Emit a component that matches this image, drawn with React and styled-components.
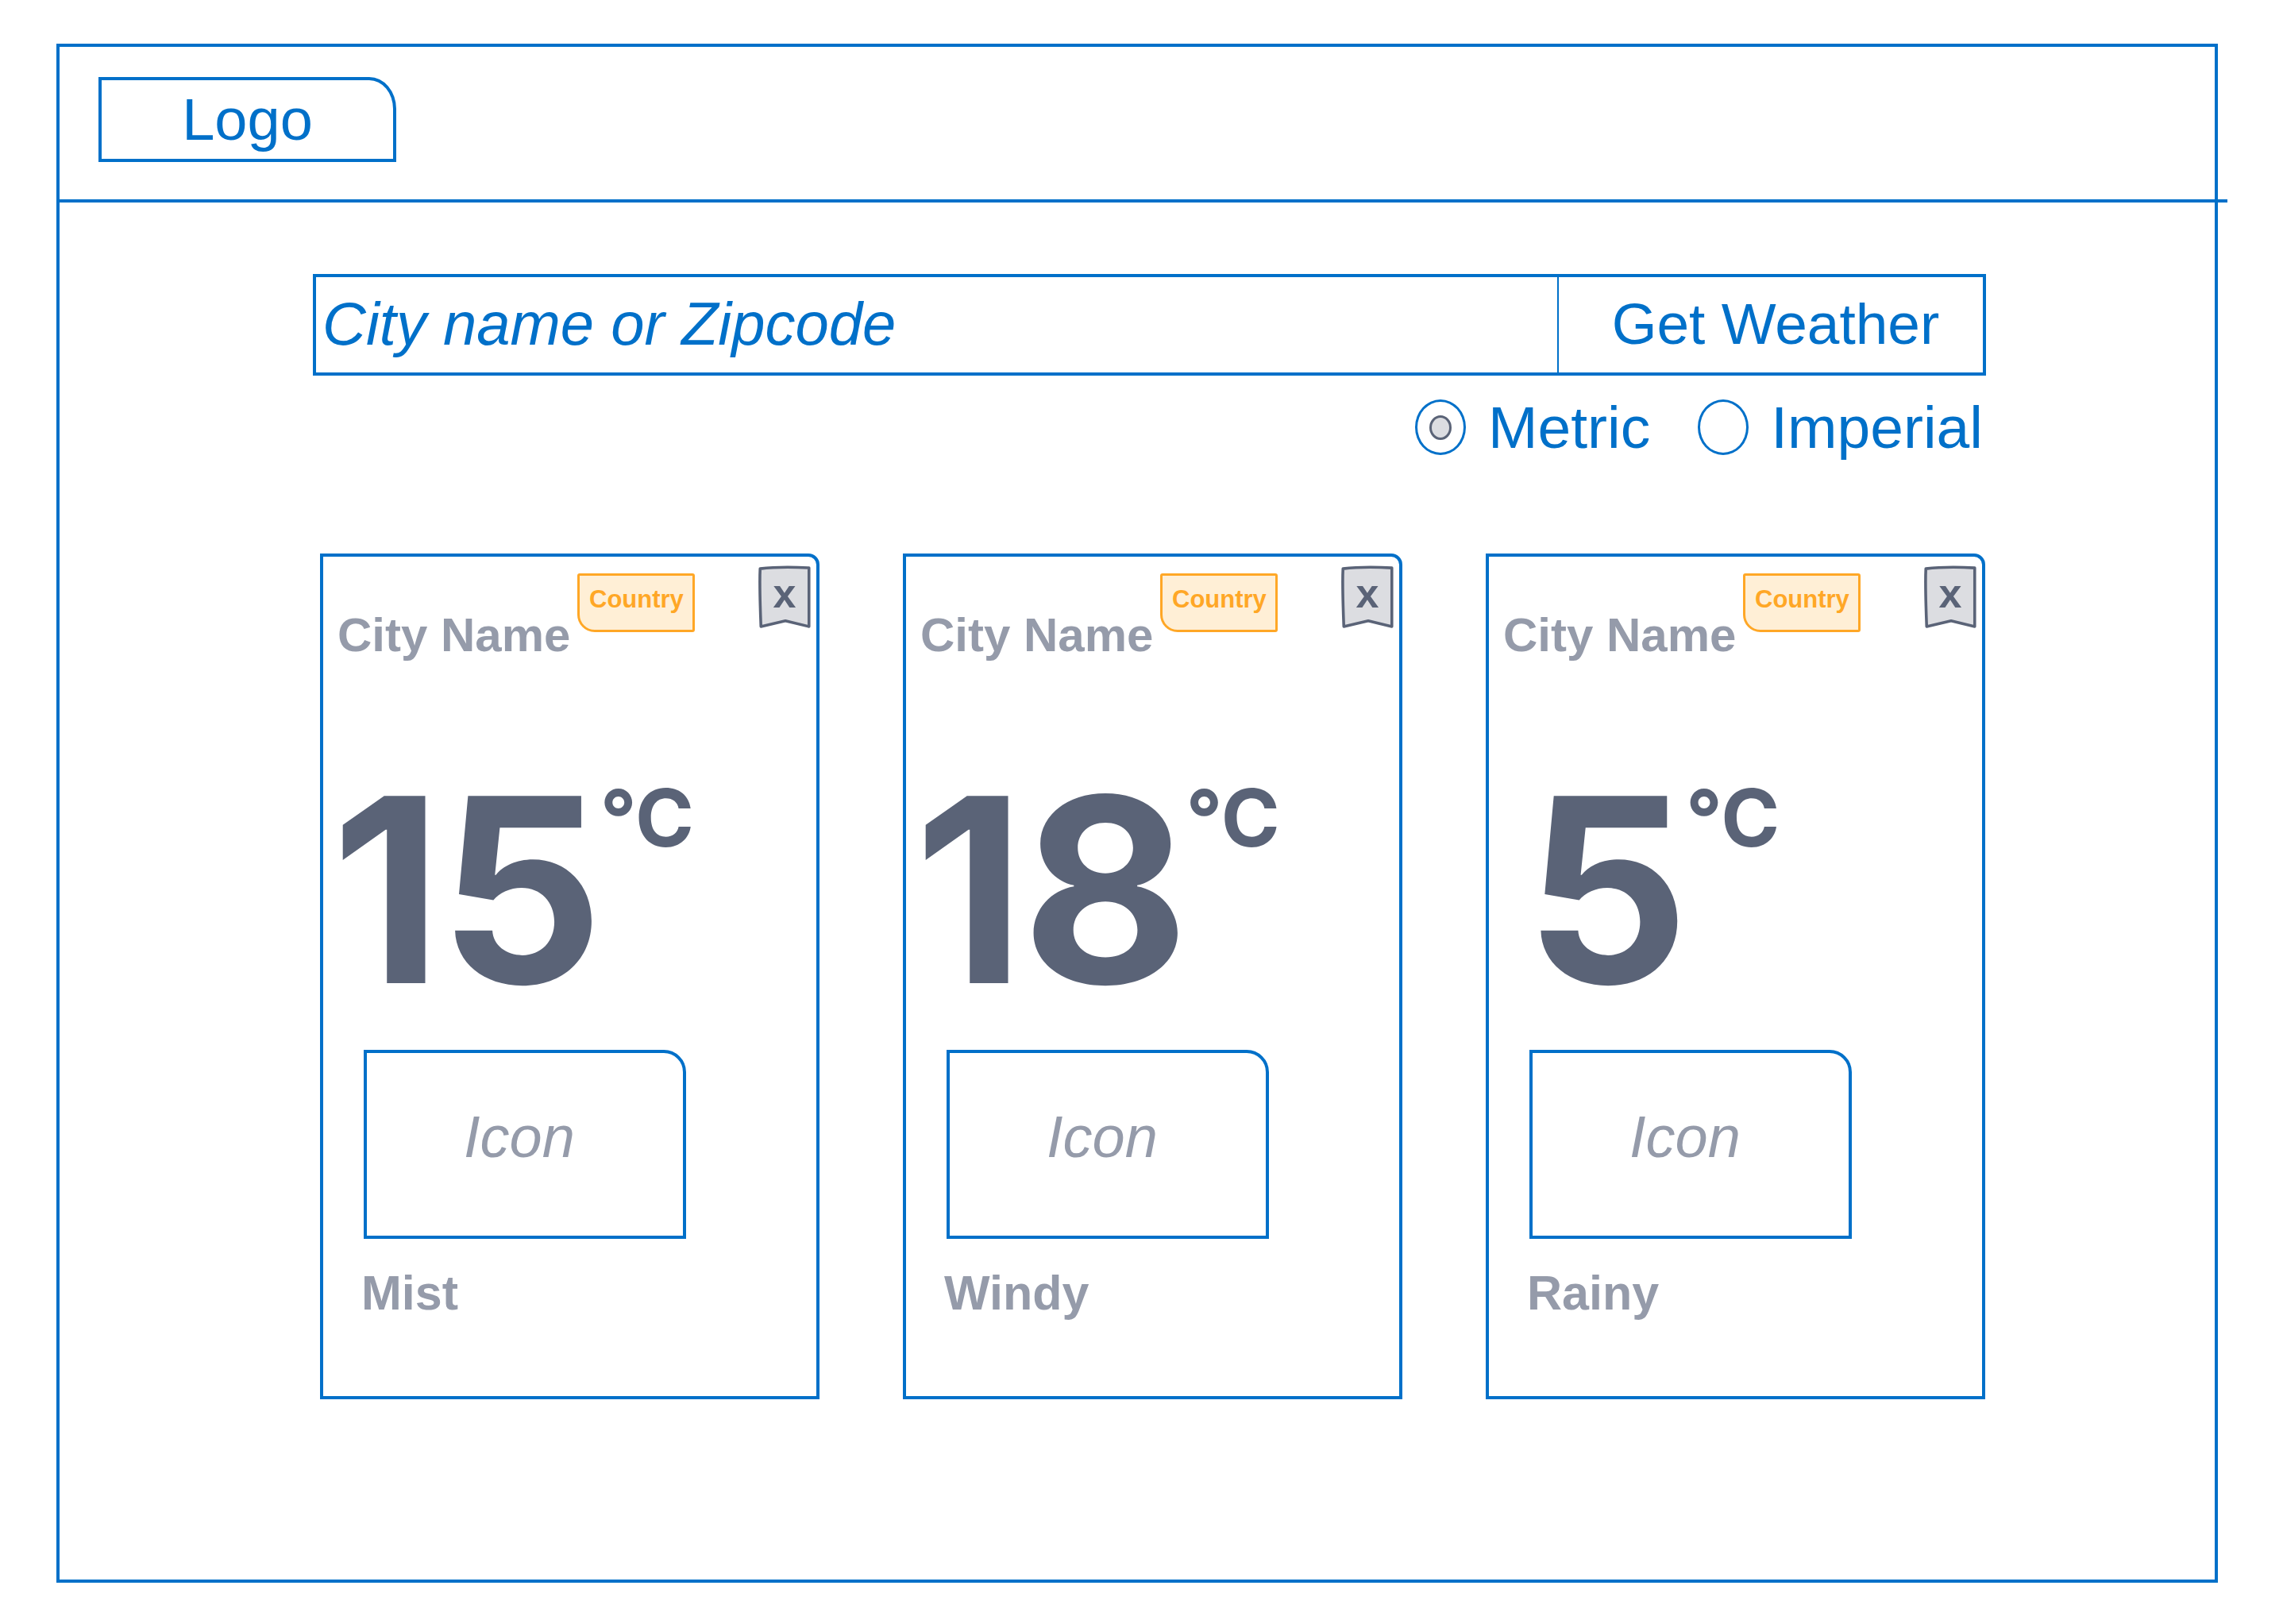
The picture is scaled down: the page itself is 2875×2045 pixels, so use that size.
import React, { useState } from 'react';
import styled, { createGlobalStyle } from 'styled-components';

const cities = [
  { id: 1, name: 'City Name', country: 'Country', temp: 15, condition: 'Mist' },
  { id: 2, name: 'City Name', country: 'Country', temp: 18, condition: 'Windy' },
  { id: 3, name: 'City Name', country: 'Country', temp: 5, condition: 'Rainy', indent: 35 },
];

const CloseShape = () => (
  <ShapeSvg viewBox="0 0 66 79" aria-hidden="true">
    <path
      d="M3 5 C 20 3, 45 3, 63 4 L 63 76 L 34 69 L 4 76 C 3 50, 2 25, 3 5 Z"
      fill="#dcdde1"
      stroke="#5a6377"
      strokeWidth="3.5"
      strokeLinejoin="round"
    />
  </ShapeSvg>
);

const WeatherCard = ({ name, country, temp, condition, indent }) => (
  <Card>
    <CardHead>
      <CityName>{name}</CityName>
      <Badge>{country}</Badge>
    </CardHead>
    <CloseButton>
      <CloseShape />
      <CloseLabel>x</CloseLabel>
    </CloseButton>
    <Temperature indent={indent || 0}>
      <Degrees>{temp}</Degrees>
      <Unit>°C</Unit>
    </Temperature>
    <IconBox>
      <IconLabel>Icon</IconLabel>
    </IconBox>
    <Condition>{condition}</Condition>
  </Card>
);

const App = () => {
  const [unit, setUnit] = useState('metric');

  return (
    <Page>
      <GlobalStyle />
      <Frame>
        <Header>
          <Logo>Logo</Logo>
        </Header>
        <Main>
          <SearchBar>
            <SearchInput placeholder="City name or Zipcode" />
            <SearchButton>Get Weather</SearchButton>
          </SearchBar>
          <UnitRow>
            <UnitOption onClick={() => setUnit('metric')}>
              <RadioCircle>{unit === 'metric' && <RadioDot />}</RadioCircle>
              <UnitLabel>Metric</UnitLabel>
            </UnitOption>
            <UnitOption onClick={() => setUnit('imperial')}>
              <RadioCircle>{unit === 'imperial' && <RadioDot />}</RadioCircle>
              <UnitLabel>Imperial</UnitLabel>
            </UnitOption>
          </UnitRow>
          <CardGrid>
            {cities.map(city => (
              <WeatherCard key={city.id} {...city} />
            ))}
          </CardGrid>
        </Main>
      </Frame>
    </Page>
  );
};

const blue = '#0070c9';
const grey = '#959baa';
const slate = '#5a6377';
const orange = '#ffa726';

const GlobalStyle = createGlobalStyle`
  html, body {
    margin: 0;
    background: #fff;
  }
  body {
    font-family: "Liberation Sans", Arial, sans-serif;
  }
  * {
    box-sizing: border-box;
  }
`;

const Page = styled.div`
  width: 2875px;
  height: 2045px;
  padding: 55px 0 0 71px;
`;

const Frame = styled.div`
  width: 2722px;
  height: 1938px;
  border: 4px solid ${blue};
  display: flex;
  flex-direction: column;
`;

const Header = styled.header`
  position: relative;
  height: 196px;
  padding: 38px 0 0 49px;
  border-bottom: 4px solid ${blue};

  &::after {
    content: '';
    position: absolute;
    right: -16px;
    bottom: -4px;
    width: 12px;
    height: 4px;
    background: ${blue};
  }
`;

const Logo = styled.div`
  width: 375px;
  height: 107px;
  border: 4px solid ${blue};
  border-top-right-radius: 34px 40px;
  display: flex;
  align-items: center;
  justify-content: center;
  color: ${blue};
  font-size: 74px;
  line-height: 1;
`;

const Main = styled.main`
  width: 2107px;
  margin-left: 319px;
  padding-top: 90px;
`;

const SearchBar = styled.div`
  display: flex;
  height: 128px;
  border: 4px solid ${blue};
`;

const SearchInput = styled.input`
  flex: 1;
  min-width: 0;
  border: none;
  outline: none;
  background: transparent;
  padding: 0 0 4px 8px;
  font-family: "Liberation Sans", Arial, sans-serif;
  font-style: italic;
  font-size: 76px;
  color: ${blue};
  &::placeholder {
    color: ${blue};
    opacity: 1;
  }
`;

const SearchButton = styled.button`
  width: 536px;
  border: none;
  border-left: 2px solid ${blue};
  background: #fff;
  padding: 0 0 4px 12px;
  font-family: "Liberation Sans", Arial, sans-serif;
  font-size: 73px;
  color: ${blue};
  cursor: pointer;
`;

const UnitRow = styled.div`
  display: flex;
  justify-content: flex-end;
  align-items: center;
  gap: 60px;
  height: 72px;
  margin-top: 29px;
  padding-right: 4px;
`;

const UnitOption = styled.label`
  display: flex;
  align-items: center;
  gap: 28px;
  cursor: pointer;
`;

const RadioCircle = styled.span`
  width: 64px;
  height: 70px;
  border: 3px solid ${blue};
  border-radius: 50%;
  display: flex;
  align-items: center;
  justify-content: center;
`;

const RadioDot = styled.span`
  width: 28px;
  height: 31px;
  border: 3px solid ${slate};
  border-radius: 50%;
  background: #dcdde1;
`;

const UnitLabel = styled.span`
  font-size: 75px;
  line-height: 1;
  color: ${blue};
`;

const CardGrid = styled.div`
  display: grid;
  grid-template-columns: repeat(3, 629px);
  column-gap: 105px;
  margin-top: 123px;
  padding-left: 9px;
`;

const Card = styled.div`
  position: relative;
  height: 1065px;
  border: 4px solid ${blue};
  border-top-right-radius: 14px;
  padding: 21px 18px 0;
  display: flex;
  flex-direction: column;
  align-items: flex-start;
`;

const CardHead = styled.div`
  display: flex;
  align-items: flex-start;
  gap: 9px;
`;

const CityName = styled.h3`
  margin: 43px 0 0;
  font-size: 60px;
  line-height: 70px;
  font-weight: 700;
  color: ${grey};
  white-space: nowrap;
`;

const Badge = styled.span`
  width: 148px;
  height: 74px;
  border: 3px solid ${orange};
  border-radius: 3px 3px 3px 22px;
  background: #ffefd6;
  display: flex;
  align-items: center;
  justify-content: center;
  padding-bottom: 8px;
  font-size: 31px;
  font-weight: 700;
  color: ${orange};
`;

const CloseButton = styled.button`
  position: absolute;
  top: 10px;
  right: 6px;
  width: 68px;
  height: 81px;
  padding: 0;
  border: none;
  background: transparent;
  cursor: pointer;
`;

const ShapeSvg = styled.svg`
  position: absolute;
  inset: 0;
  width: 68px;
  height: 81px;
`;

const CloseLabel = styled.span`
  position: relative;
  display: block;
  margin-top: -10px;
  font-family: "Liberation Sans", Arial, sans-serif;
  font-size: 52px;
  font-weight: 700;
  line-height: 1;
  color: ${slate};
`;

const Temperature = styled.div`
  display: flex;
  align-items: flex-start;
  margin-top: 123px;
  margin-left: ${props => props.indent - 8}px;
  color: ${slate};
  font-family: Inter, "Liberation Sans", Arial, sans-serif;
  font-weight: 700;
`;

const Degrees = styled.span`
  font-size: 324px;
  line-height: 1;
  letter-spacing: -4px;
`;

const Unit = styled.span`
  margin-top: 22px;
  font-size: 100px;
  line-height: 1;
`;

const IconBox = styled.div`
  width: 406px;
  height: 238px;
  margin: 40px 0 0 33px;
  border: 4px solid ${blue};
  border-top-right-radius: 28px;
  display: flex;
  align-items: center;
  justify-content: center;
  padding: 0 14px 20px 0;
`;

const IconLabel = styled.span`
  font-size: 74px;
  font-style: italic;
  color: ${grey};
`;

const Condition = styled.p`
  margin: 33px 0 0 30px;
  font-size: 61px;
  font-weight: 700;
  color: ${grey};
`;

export default App;
